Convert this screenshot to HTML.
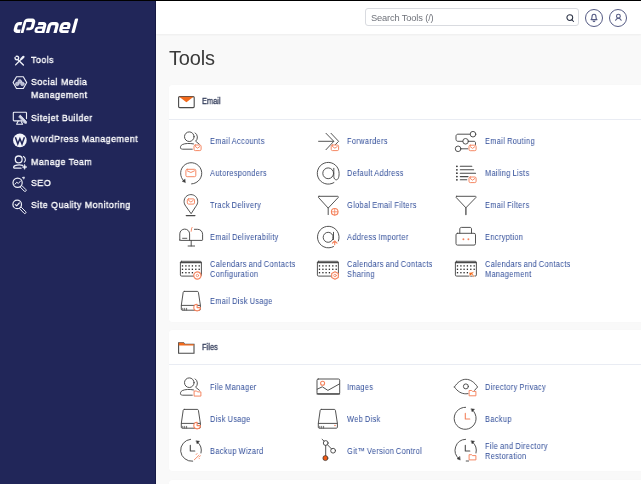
<!DOCTYPE html>
<html><head><meta charset="utf-8">
<style>
*{margin:0;padding:0;box-sizing:border-box}
html,body{width:641px;height:484px;overflow:hidden;background:#f9f9f9;font-family:"Liberation Sans",sans-serif}
#topline{position:absolute;left:0;top:0;width:641px;height:1px;background:#000}
#side{position:absolute;left:0;top:1px;width:156px;height:483px;background:#212659;border-right:1px solid #161a45}
.nav{position:absolute;left:30.5px;color:#fff;font-size:9.9px;line-height:13.4px;white-space:nowrap;letter-spacing:0.5px;transform:scaleX(0.9);transform-origin:0 0;will-change:transform;-webkit-text-stroke:0.35px #fff}
#header{position:absolute;left:156px;top:1px;width:485px;height:33px;background:#fff;box-shadow:0 1px 2px rgba(0,0,0,0.05)}
#search{position:absolute;left:365px;top:8px;width:214px;height:18.2px;border:1px solid #d9dbe0;border-radius:3px;background:#fff}
#search span{position:absolute;left:4.5px;top:3.5px;font-size:9.3px;color:#6f727a;letter-spacing:-0.15px;will-change:transform}
.circ{position:absolute;top:8.6px;width:18px;height:18px;border:1px solid #555b84;border-radius:50%}
h1{position:absolute;left:169px;top:47px;font-weight:normal;font-size:20px;color:#3a3a3a;letter-spacing:-0.2px;will-change:transform}
.panel{position:absolute;left:169px;width:480px;background:#fff;border-radius:3px;box-shadow:0 0 1px rgba(0,0,0,0.04)}
.ph{position:absolute;left:0;top:0;width:100%;border-bottom:1px solid #e9ecf3}
.ph span{position:absolute;left:32.8px;font-size:8.7px;color:#323c5a;transform:scaleX(0.86);transform-origin:0 0;will-change:transform;-webkit-text-stroke:0.3px #323c5a}
.it{position:absolute;font-size:8.7px;line-height:10px;color:#2e4b98;white-space:nowrap;letter-spacing:0.4px;word-spacing:-0.6px;transform:scaleX(0.85);transform-origin:0 0;will-change:transform}
.ic{position:absolute;overflow:visible}
</style></head><body>
<div id="topline"></div>
<div id="side">
<svg class="ic" style="left:0;top:0" width="90" height="40" viewBox="0 0 90 40" fill="#fff" fill-rule="evenodd" stroke="none">
<g transform="matrix(1,0,-0.27,1,8.64,0)">
<path d="M19.3 20.9 H16.6 A3.9 3.9 0 0 0 12.7 24.8 V28.1 A3.9 3.9 0 0 0 16.6 32 H19.8 V28.6 H16.8 A0.8 0.8 0 0 1 16 27.8 V25.1 A0.8 0.8 0 0 1 16.8 24.3 H19.3 Z"/>
<path d="M20.6 32 V21.4 A3.8 3.8 0 0 1 24.4 17.6 H28.5 A3.8 3.8 0 0 1 32.3 21.4 V25.4 A3.8 3.8 0 0 1 28.5 29.2 H25.3 V26.4 H28.3 A0.8 0.8 0 0 0 29.1 25.6 V21.8 A0.8 0.8 0 0 0 28.3 21 H23.4 V32 Z"/>
<path d="M35.6 20.9 H40.4 A3.9 3.9 0 0 1 44.3 24.8 V32 H37 A3.2 3.2 0 0 1 33.8 28.8 A3.2 3.2 0 0 1 37 25.6 H41.1 V23.9 H35.6 Z M37.6 27.7 H41.1 V29.9 H37.6 A1.1 1.1 0 0 1 37.6 27.7 Z"/>
<path d="M45.8 32 V24.8 A3.9 3.9 0 0 1 49.7 20.9 H52.8 A3.9 3.9 0 0 1 56.7 24.8 V32 H53.4 V25.2 A0.9 0.9 0 0 0 52.5 24.3 H50 A0.9 0.9 0 0 0 49.1 25.2 V32 Z"/>
<path d="M62.1 20.9 H64.6 A3.9 3.9 0 0 1 68.5 24.8 V28.1 H61.6 V28.6 A0.6 0.6 0 0 0 62.2 29.2 H68.2 V32 H62 A3.8 3.8 0 0 1 58.2 28.2 V24.8 A3.9 3.9 0 0 1 62.1 20.9 Z M62.3 24.1 H64.6 A0.8 0.8 0 0 1 65.4 24.9 V26 H61.6 V24.8 A0.7 0.7 0 0 1 62.3 24.1 Z"/>
<rect x="71.2" y="17.6" width="3.3" height="14.4" rx="1"/>
</g></svg>
</div>
<svg class="ic" style="left:8px;top:50px" width="24" height="24" viewBox="0 0 24 24" fill="none" stroke="#eef0f8" stroke-width="1.25" stroke-linecap="round" stroke-linejoin="round"><path d="M15.4 6.9 L13.3 9" stroke-width="2.3"/><path d="M12.6 9.7 L7.6 14.9" stroke-width="1.3"/><path d="M10.2 9.9 L15.4 15" stroke-width="1.4"/><path d="M8.2 6.3 A1.8 1.8 0 1 1 7.1 7.5" stroke-width="1.4"/></svg>
<svg class="ic" style="left:8px;top:72px" width="24" height="24" viewBox="0 0 24 24" fill="none" stroke="#eef0f8" stroke-width="1.25" stroke-linecap="round" stroke-linejoin="round"><path d="M8.5 4.8 H15.3 L18.7 10.6 L15.3 16.5 H8.5 L5.1 10.6 Z" stroke-width="1.1"/><g fill="#b4b7cf" stroke="#dfe1ee" stroke-width="0.6"><circle cx="11.8" cy="9.4" r="1.8"/><circle cx="9.2" cy="11.9" r="1.8"/><circle cx="14.4" cy="11.9" r="1.8"/></g></svg>
<svg class="ic" style="left:8px;top:106px" width="24" height="24" viewBox="0 0 24 24" fill="none" stroke="#eef0f8" stroke-width="1.25" stroke-linecap="round" stroke-linejoin="round"><path d="M14 14.9 H6.1 A0.8 0.8 0 0 1 5.3 14.1 V7.1 A0.8 0.8 0 0 1 6.1 6.3 H17.7 A0.8 0.8 0 0 1 18.5 7.1 V12.6" stroke-width="1.1"/><path d="M10.2 15.1 L8.6 18.3 H14.6 L13.4 15.8" stroke-width="1.1"/><path d="M10.9 10.5 L12.3 9.1 L18.6 15.7 L18.3 17.4 L16.6 17.1 Z" fill="#d5d8e8" stroke-width="0.7"/></svg>
<svg class="ic" style="left:8px;top:128px" width="24" height="24" viewBox="0 0 24 24" fill="none" stroke="#eef0f8" stroke-width="1.25" stroke-linecap="round" stroke-linejoin="round"><circle cx="11.9" cy="12.4" r="6.8" fill="#f4f5fb" stroke="none"/><path d="M7.4 9.2 L9.8 15.9 L11.9 10.8 L14 15.9 L16.4 9.2" stroke="#212659" stroke-width="1.5" stroke-linejoin="miter" stroke-linecap="butt"/></svg>
<svg class="ic" style="left:8px;top:150px" width="24" height="24" viewBox="0 0 24 24" fill="none" stroke="#eef0f8" stroke-width="1.25" stroke-linecap="round" stroke-linejoin="round"><circle cx="10.7" cy="9.4" r="3.4" stroke-width="1.3"/><path d="M15.4 6.4 A3.6 3.6 0 0 1 16.3 12.2" stroke-width="1.1"/><path d="M14.6 15.3 C12.5 14.7 9 14.8 7 15.7 C5.4 16.4 5.2 18.2 6.6 18.2 H13" stroke-width="1.3"/><path d="M16.6 14.6 Q16.9 16.7 19 17 Q16.9 17.3 16.6 19.4 Q16.3 17.3 14.2 17 Q16.3 16.7 16.6 14.6 Z" fill="#eef0f8" stroke-width="0.5"/></svg>
<svg class="ic" style="left:8px;top:172px" width="24" height="24" viewBox="0 0 24 24" fill="none" stroke="#eef0f8" stroke-width="1.25" stroke-linecap="round" stroke-linejoin="round"><circle cx="9.6" cy="10.7" r="4.6" stroke-width="1.2"/><path d="M12.9 14.1 L13.7 13.4 L17.9 17.6 A1 1 0 0 1 17.9 19 L17.7 19.2 A1 1 0 0 1 16.3 19.2 L12.2 15 Z" stroke-width="1"/><path d="M7 12.2 L8.8 10.2 L10.3 11.5 L12.5 9" stroke-width="1"/><path d="M14.6 5.4 L16.4 5 L16 6.8 Z" fill="#eef0f8" stroke-width="0.7"/></svg>
<svg class="ic" style="left:8px;top:194px" width="24" height="24" viewBox="0 0 24 24" fill="none" stroke="#eef0f8" stroke-width="1.25" stroke-linecap="round" stroke-linejoin="round"><circle cx="9.2" cy="10.4" r="4.3" stroke-width="1.2"/><path d="M12.3 13.8 L13.1 13.1 L17.7 17.7 A1 1 0 0 1 17.7 19.1 L17.5 19.3 A1 1 0 0 1 16.1 19.3 L11.6 14.7 Z" stroke-width="1"/><path d="M7.3 10.6 L8.7 11.8 L11.3 9" stroke-width="1.2"/></svg>
<div class="nav" style="top:52.67px">Tools</div>
<div class="nav" style="top:74.87px">Social Media<br>Management</div>
<div class="nav" style="top:110.67px">Sitejet Builder</div>
<div class="nav" style="top:132.27px">WordPress Management</div>
<div class="nav" style="top:154.57px">Manage Team</div>
<div class="nav" style="top:176.37px">SEO</div>
<div class="nav" style="top:198.37px">Site Quality Monitoring</div>
<div id="header"></div>
<div id="search"><span>Search Tools (/)</span>
<svg class="ic" style="left:200px;top:4.6px" width="9" height="9" viewBox="0 0 9 9" fill="none" stroke="#2b3245" stroke-width="1.05"><circle cx="3.8" cy="3.6" r="2.9"/><path d="M5.9 5.8 L7.6 7.5" stroke-linecap="round"/></svg>
</div>
<div class="circ" style="left:585px"></div>
<div class="circ" style="left:609.2px"></div>
<svg class="ic" style="left:584px;top:8px" width="20" height="20" viewBox="0 0 20 20" fill="none" stroke="#555b84" stroke-width="1.1" stroke-linejoin="round" stroke-linecap="round"><path d="M7 11.6 C7.8 11 8 10.2 8 8.9 C8 7.2 8.9 6.3 10 6.3 C11.1 6.3 12 7.2 12 8.9 C12 10.2 12.2 11 13 11.6 Z"/><path d="M9.1 12.8 A0.9 0.9 0 0 0 10.9 12.8"/></svg>
<svg class="ic" style="left:609px;top:8px" width="20" height="20" viewBox="0 0 20 20" fill="none" stroke="#555b84" stroke-width="1.1" stroke-linecap="round"><circle cx="9.4" cy="8.2" r="1.9"/><path d="M6.6 12.2 C7.3 11 8.2 10.3 9.4 10.3 C10.6 10.3 11.5 11 12.2 12.2"/></svg>
<h1>Tools</h1>
<div class="panel" style="top:85px;height:237px"><div class="ph" style="height:35px"><span style="top:10.8px">Email</span></div></div>
<svg class="ic" style="left:178px;top:96px" width="17" height="12" viewBox="0 0 17 12"><rect x="0.6" y="0.6" width="15.6" height="11" rx="1" fill="#fff" stroke="#4a4a4a" stroke-width="1.1"/><path d="M1.2 0.8 H15.6 L8.4 6.2 Z" fill="#f26a1c"/></svg>
<div class="panel" style="top:330px;height:141.4px"><div class="ph" style="height:35px"><span style="top:11.8px">Files</span></div></div>
<svg class="ic" style="left:178px;top:342px" width="17" height="12" viewBox="0 0 17 12"><path d="M0.6 11.3 V0.8 H5.6 L6.6 2.2 H16 V11.3 Z" fill="#fff" stroke="#4a4a4a" stroke-width="1.1"/><path d="M0.8 0.8 H5.6 L6.6 2.2 H15.8 V3.4 H0.8 Z" fill="#f26a1c"/></svg>
<div class="panel" style="top:480px;height:20px"></div>
<svg class="ic" style="left:176px;top:128px" width="30" height="30" viewBox="0 0 30 30" fill="none" stroke="#4a4a4a" stroke-width="0.95" stroke-linecap="round" stroke-linejoin="round"><circle cx="13.3" cy="8.7" r="4.8"/><path d="M19.2 4.9 A5.2 5.2 0 0 1 19.6 13.2 L23.4 16.3"/><path d="M17.5 15.9 C14 15.2 9 15.2 6.3 16.6 C4.6 17.5 4.2 19 4.6 20.2 C4.9 21 5.6 21.2 6.5 21.2 H16.3"/><rect x="18" y="17" width="7.1" height="5.6" rx="1.3" stroke="#f4825c" fill="#fff"/><path d="M19.3 18.5 L21.55 20.2 L23.8 18.5" stroke="#f4825c"/></svg>
<div class="it" style="left:209.5px;top:136.30px">Email Accounts</div>
<svg class="ic" style="left:313px;top:128px" width="30" height="30" viewBox="0 0 30 30" fill="none" stroke="#4a4a4a" stroke-width="0.95" stroke-linecap="round" stroke-linejoin="round"><path d="M5.6 13.3 H20.5"/><path d="M13 5.3 L20.8 13.3 L13 21.7"/><path d="M18 5.3 L25.6 13.3 L22 17"/><rect x="18.2" y="17" width="7.4" height="5.6" rx="1.3" stroke="#f4825c" fill="#fff"/><path d="M19.5 18.5 L21.9 20.2 L24.3 18.5" stroke="#f4825c"/></svg>
<div class="it" style="left:347.0px;top:136.30px">Forwarders</div>
<svg class="ic" style="left:451px;top:128px" width="30" height="30" viewBox="0 0 30 30" fill="none" stroke="#4a4a4a" stroke-width="0.95" stroke-linecap="round" stroke-linejoin="round"><circle cx="22" cy="6.2" r="2.8"/><path d="M19.2 6.2 H7 C5.8 6.2 5 7 5 8.2 V11.3 C5 12.5 5.8 13.3 7 13.3 H11.8"/><circle cx="14.6" cy="13.3" r="2.8"/><path d="M17.4 13.3 H23 C23.9 13.3 24.5 14 24.5 14.9 V16.5"/><circle cx="7.1" cy="20.8" r="2.8"/><path d="M9.9 20.8 H16.8"/><rect x="18" y="17.2" width="7.1" height="5.5" rx="1.3" stroke="#f4825c" fill="#fff"/><path d="M19.3 18.7 L21.55 20.4 L23.8 18.7" stroke="#f4825c"/></svg>
<div class="it" style="left:485.0px;top:136.30px">Email Routing</div>
<svg class="ic" style="left:176px;top:160px" width="30" height="30" viewBox="0 0 30 30" fill="none" stroke="#4a4a4a" stroke-width="0.95" stroke-linecap="round" stroke-linejoin="round"><path d="M15.6 23.9 A10.6 10.6 0 1 0 8.3 21.4"/><path d="M9.2 22.5 L6.2 21.3 L8.8 19.2 Z" fill="#333" stroke-width="0.5"/><rect x="9.9" y="9.3" width="9.9" height="7.4" rx="1.3" stroke="#f4825c" fill="#fff"/><path d="M11.200000000000001 10.8 L14.850000000000001 12.5 L18.5 10.8" stroke="#f4825c"/></svg>
<div class="it" style="left:209.5px;top:168.30px">Autoresponders</div>
<svg class="ic" style="left:313px;top:160px" width="30" height="30" viewBox="0 0 30 30" fill="none" stroke="#4a4a4a" stroke-width="0.95" stroke-linecap="round" stroke-linejoin="round"><circle cx="15.2" cy="13.3" r="5.4"/><path d="M20.8 8.3 V16.5 C20.8 18.6 22 19.8 23.3 19.8 C25 19.8 26.1 17.5 26.1 13.6 A10.9 10.9 0 1 0 20.9 22.6"/></svg>
<div class="it" style="left:347.0px;top:168.30px">Default Address</div>
<svg class="ic" style="left:451px;top:160px" width="30" height="30" viewBox="0 0 30 30" fill="none" stroke="#4a4a4a" stroke-width="0.95" stroke-linecap="round" stroke-linejoin="round"><circle cx="5.9" cy="6.3" r="0.9" fill="#333" stroke="none"/><circle cx="5.9" cy="9.8" r="0.9" fill="#333" stroke="none"/><circle cx="5.9" cy="13.2" r="0.9" fill="#333" stroke="none"/><circle cx="5.9" cy="16.6" r="0.9" fill="#333" stroke="none"/><circle cx="5.9" cy="19.8" r="0.9" fill="#333" stroke="none"/><path d="M9.3 6.3 H20.8" stroke-width="1.1"/><path d="M9.3 9.8 H22.6" stroke-width="1.1"/><path d="M9.3 13.2 H24.5" stroke-width="1.1"/><path d="M9.3 16.6 H17" stroke-width="1.1"/><path d="M9.3 19.8 H15.8" stroke-width="1.1"/><rect x="18" y="17" width="7.1" height="5.6" rx="1.3" stroke="#f4825c" fill="#fff"/><path d="M19.3 18.5 L21.55 20.2 L23.8 18.5" stroke="#f4825c"/></svg>
<div class="it" style="left:485.0px;top:168.30px">Mailing Lists</div>
<svg class="ic" style="left:176px;top:192px" width="30" height="30" viewBox="0 0 30 30" fill="none" stroke="#4a4a4a" stroke-width="0.95" stroke-linecap="round" stroke-linejoin="round"><path d="M14.9 21.4 L9.8 14.2 C8.6 12.6 8.1 11.2 8.1 9.5 C8.1 5.6 11.1 2.6 14.9 2.6 C18.7 2.6 21.7 5.6 21.7 9.5 C21.7 11.2 21.2 12.6 20 14.2 Z"/><path d="M10.3 23.6 H18.9" stroke-width="1.3"/><rect x="11.3" y="6.9" width="7.2" height="5.2" rx="1.3" stroke="#f4825c" fill="#fff"/><path d="M12.600000000000001 8.4 L14.9 10.100000000000001 L17.2 8.4" stroke="#f4825c"/></svg>
<div class="it" style="left:209.5px;top:200.30px">Track Delivery</div>
<svg class="ic" style="left:313px;top:192px" width="30" height="30" viewBox="0 0 30 30" fill="none" stroke="#4a4a4a" stroke-width="0.95" stroke-linecap="round" stroke-linejoin="round"><path d="M6 4.3 H24.7 C25.3 4.3 25.6 5 25.2 5.5 L15.2 16.1 L5.5 5.5 C5.1 5 5.4 4.3 6 4.3 Z"/><path d="M15.2 16.1 V22.6"/><circle cx="21.7" cy="19.8" r="3.3" stroke="#f4825c" fill="#fff" stroke-width="1.1"/><path d="M18.5 19.8 H24.9 M21.7 16.6 V23.0" stroke="#f4825c" stroke-width="0.8"/></svg>
<div class="it" style="left:347.0px;top:200.30px">Global Email Filters</div>
<svg class="ic" style="left:451px;top:192px" width="30" height="30" viewBox="0 0 30 30" fill="none" stroke="#4a4a4a" stroke-width="0.95" stroke-linecap="round" stroke-linejoin="round"><path d="M5.7 4.3 H24.4 C25 4.3 25.3 5 24.9 5.5 L14.9 15.8 L5.2 5.5 C4.8 5 5.1 4.3 5.7 4.3 Z"/><path d="M14.9 15.8 V22.6" stroke-width="1.3"/></svg>
<div class="it" style="left:485.0px;top:200.30px">Email Filters</div>
<svg class="ic" style="left:176px;top:224px" width="30" height="30" viewBox="0 0 30 30" fill="none" stroke="#4a4a4a" stroke-width="0.95" stroke-linecap="round" stroke-linejoin="round"><path d="M3.8 16.4 V9.9 C3.8 7.2 6 5.1 8.7 5.1 C11.4 5.1 13.6 7.2 13.6 9.9 V16.4"/><path d="M18.4 5.3 H21.6 C24.3 5.3 26.6 7.5 26.6 10.2 V15.8 C26.6 16.2 26.3 16.4 26 16.4 H4.4 C4 16.4 3.8 16.2 3.8 15.8"/><path d="M6.6 14.3 H10.8" stroke-width="0.9"/><path d="M15.2 16.4 V22 M12.1 22 H18.6"/><path d="M16.2 3.3 C15.2 4 15.6 5.3 15.2 7.3" stroke="#f4825c"/></svg>
<div class="it" style="left:209.5px;top:232.30px">Email Deliverability</div>
<svg class="ic" style="left:313px;top:224px" width="30" height="30" viewBox="0 0 30 30" fill="none" stroke="#4a4a4a" stroke-width="0.95" stroke-linecap="round" stroke-linejoin="round"><circle cx="15.2" cy="13.3" r="5"/><path d="M20.5 8.3 V15.5"/><path d="M25.4 17 A10.8 10.8 0 1 0 20.5 22.6"/><path d="M21.7 20.8 V17.3 M19.4 19.1 L21.7 17 L24 19.1" stroke="#f4825c" stroke-width="1.1"/></svg>
<div class="it" style="left:347.0px;top:232.30px">Address Importer</div>
<svg class="ic" style="left:451px;top:224px" width="30" height="30" viewBox="0 0 30 30" fill="none" stroke="#4a4a4a" stroke-width="0.95" stroke-linecap="round" stroke-linejoin="round"><path d="M8.8 9.3 V5 C8.8 4 9.5 3.4 10.4 3.4 H19 C19.9 3.4 20.5 4 20.5 5 V9.3"/><rect x="5" y="9.3" width="19.5" height="11.8" rx="1.5"/><circle cx="12.4" cy="15.2" r="0.95" fill="#f4825c" stroke="none"/><circle cx="17.4" cy="15.2" r="0.95" fill="#f4825c" stroke="none"/></svg>
<div class="it" style="left:485.0px;top:232.30px">Encryption</div>
<svg class="ic" style="left:176px;top:256px" width="30" height="30" viewBox="0 0 30 30" fill="none" stroke="#4a4a4a" stroke-width="0.95" stroke-linecap="round" stroke-linejoin="round"><rect x="4.4" y="5.3" width="21" height="14.8" rx="1.2"/><path d="M4.6 6.6 H25.2" stroke-width="1.4"/><rect x="5.85" y="9.25" width="1.3" height="1.3" fill="#222" stroke="none"/><rect x="9.25" y="9.25" width="1.3" height="1.3" fill="#222" stroke="none"/><rect x="12.45" y="9.25" width="1.3" height="1.3" fill="#222" stroke="none"/><rect x="15.749999999999998" y="9.25" width="1.3" height="1.3" fill="#222" stroke="none"/><rect x="19.150000000000002" y="9.25" width="1.3" height="1.3" fill="#222" stroke="none"/><rect x="22.55" y="9.25" width="1.3" height="1.3" fill="#222" stroke="none"/><rect x="5.85" y="12.65" width="1.3" height="1.3" fill="#222" stroke="none"/><rect x="9.25" y="12.65" width="1.3" height="1.3" fill="#222" stroke="none"/><rect x="12.45" y="12.65" width="1.3" height="1.3" fill="#222" stroke="none"/><rect x="15.749999999999998" y="12.65" width="1.3" height="1.3" fill="#222" stroke="none"/><rect x="19.150000000000002" y="12.65" width="1.3" height="1.3" fill="#222" stroke="none"/><rect x="22.55" y="12.65" width="1.3" height="1.3" fill="#222" stroke="none"/><rect x="5.85" y="16.05" width="1.3" height="1.3" fill="#222" stroke="none"/><rect x="9.25" y="16.05" width="1.3" height="1.3" fill="#222" stroke="none"/><rect x="12.45" y="16.05" width="1.3" height="1.3" fill="#222" stroke="none"/><rect x="15.749999999999998" y="16.05" width="1.3" height="1.3" fill="#222" stroke="none"/><circle cx="21.4" cy="19.5" r="3.6" stroke="#f4825c" fill="#fff" stroke-width="1.2" stroke-dasharray="1.6 0.7"/><circle cx="21.4" cy="19.5" r="1.2" stroke="#f4825c" stroke-width="0.8"/></svg>
<div class="it" style="left:209.5px;top:258.90px">Calendars and Contacts<br>Configuration</div>
<svg class="ic" style="left:313px;top:256px" width="30" height="30" viewBox="0 0 30 30" fill="none" stroke="#4a4a4a" stroke-width="0.95" stroke-linecap="round" stroke-linejoin="round"><rect x="4.4" y="5.3" width="21" height="14.8" rx="1.2"/><path d="M4.6 6.6 H25.2" stroke-width="1.4"/><rect x="5.85" y="9.25" width="1.3" height="1.3" fill="#222" stroke="none"/><rect x="9.25" y="9.25" width="1.3" height="1.3" fill="#222" stroke="none"/><rect x="12.45" y="9.25" width="1.3" height="1.3" fill="#222" stroke="none"/><rect x="15.749999999999998" y="9.25" width="1.3" height="1.3" fill="#222" stroke="none"/><rect x="19.150000000000002" y="9.25" width="1.3" height="1.3" fill="#222" stroke="none"/><rect x="22.55" y="9.25" width="1.3" height="1.3" fill="#222" stroke="none"/><rect x="5.85" y="12.65" width="1.3" height="1.3" fill="#222" stroke="none"/><rect x="9.25" y="12.65" width="1.3" height="1.3" fill="#222" stroke="none"/><rect x="12.45" y="12.65" width="1.3" height="1.3" fill="#222" stroke="none"/><rect x="15.749999999999998" y="12.65" width="1.3" height="1.3" fill="#222" stroke="none"/><rect x="19.150000000000002" y="12.65" width="1.3" height="1.3" fill="#222" stroke="none"/><rect x="22.55" y="12.65" width="1.3" height="1.3" fill="#222" stroke="none"/><rect x="5.85" y="16.05" width="1.3" height="1.3" fill="#222" stroke="none"/><rect x="9.25" y="16.05" width="1.3" height="1.3" fill="#222" stroke="none"/><rect x="12.45" y="16.05" width="1.3" height="1.3" fill="#222" stroke="none"/><rect x="15.749999999999998" y="16.05" width="1.3" height="1.3" fill="#222" stroke="none"/><path d="M22 15.7 L25.3 17.6 V21.4 L22 23.3 L18.7 21.4 V17.6 Z" stroke="#f4825c" fill="#fff" stroke-width="1.1"/><circle cx="22" cy="19.5" r="1.3" stroke="#f4825c" stroke-width="0.8"/></svg>
<div class="it" style="left:347.0px;top:258.90px">Calendars and Contacts<br>Sharing</div>
<svg class="ic" style="left:451px;top:256px" width="30" height="30" viewBox="0 0 30 30" fill="none" stroke="#4a4a4a" stroke-width="0.95" stroke-linecap="round" stroke-linejoin="round"><rect x="4.4" y="5.3" width="21" height="14.8" rx="1.2"/><path d="M4.6 6.6 H25.2" stroke-width="1.4"/><rect x="5.85" y="9.25" width="1.3" height="1.3" fill="#222" stroke="none"/><rect x="9.25" y="9.25" width="1.3" height="1.3" fill="#222" stroke="none"/><rect x="12.45" y="9.25" width="1.3" height="1.3" fill="#222" stroke="none"/><rect x="15.749999999999998" y="9.25" width="1.3" height="1.3" fill="#222" stroke="none"/><rect x="19.150000000000002" y="9.25" width="1.3" height="1.3" fill="#222" stroke="none"/><rect x="22.55" y="9.25" width="1.3" height="1.3" fill="#222" stroke="none"/><rect x="5.85" y="12.65" width="1.3" height="1.3" fill="#222" stroke="none"/><rect x="9.25" y="12.65" width="1.3" height="1.3" fill="#222" stroke="none"/><rect x="12.45" y="12.65" width="1.3" height="1.3" fill="#222" stroke="none"/><rect x="15.749999999999998" y="12.65" width="1.3" height="1.3" fill="#222" stroke="none"/><rect x="19.150000000000002" y="12.65" width="1.3" height="1.3" fill="#222" stroke="none"/><rect x="22.55" y="12.65" width="1.3" height="1.3" fill="#222" stroke="none"/><rect x="5.85" y="16.05" width="1.3" height="1.3" fill="#222" stroke="none"/><rect x="9.25" y="16.05" width="1.3" height="1.3" fill="#222" stroke="none"/><rect x="12.45" y="16.05" width="1.3" height="1.3" fill="#222" stroke="none"/><rect x="15.749999999999998" y="16.05" width="1.3" height="1.3" fill="#222" stroke="none"/><path d="M18 16.6 L23.4 15.8 L21.6 17.8 L23.6 20.6 L22.6 21.2 L20.6 18.6 L18.8 20.6 Z" fill="#f26a1c" stroke="#fff" stroke-width="0.6"/></svg>
<div class="it" style="left:485.0px;top:258.90px">Calendars and Contacts<br>Management</div>
<svg class="ic" style="left:176px;top:288px" width="30" height="30" viewBox="0 0 30 30" fill="none" stroke="#4a4a4a" stroke-width="0.95" stroke-linecap="round" stroke-linejoin="round"><path d="M8.3 3.4 H21.3 C21.9 3.4 22.3 3.8 22.4 4.3 L24.4 17.4 V21.2 C24.4 21.8 24 22.2 23.4 22.2 H6.3 C5.7 22.2 5.3 21.8 5.3 21.2 V17.4 L7.2 4.3 C7.3 3.8 7.7 3.4 8.3 3.4 Z" fill="#fff"/><path d="M5.4 17.4 H24.3"/><path d="M6.8 22 V20.3 M8.7 22 V20.3 M10.6 22 V20.3" stroke-width="0.8"/><path d="M21.1 16.3 A3.3 3.3 0 1 0 24.400000000000002 19.6 H21.1 Z" stroke="#f4825c" fill="#fff" stroke-width="1.1"/></svg>
<div class="it" style="left:209.5px;top:296.30px">Email Disk Usage</div>
<svg class="ic" style="left:176px;top:374px" width="30" height="30" viewBox="0 0 30 30" fill="none" stroke="#4a4a4a" stroke-width="0.95" stroke-linecap="round" stroke-linejoin="round"><circle cx="13.3" cy="8.7" r="4.8"/><path d="M19.2 4.9 A5.2 5.2 0 0 1 19.6 13.2 L23.4 16.3"/><path d="M17.5 15.9 C14 15.2 9 15.2 6.3 16.6 C4.6 17.5 4.2 19 4.6 20.2 C4.9 21 5.6 21.2 6.5 21.2 H16.3"/><path d="M18.1 21.7 V17 H20.700000000000003 L21.5 17.9 H24.900000000000002 V21.7 Z" stroke="#f4825c" fill="#fff"/></svg>
<div class="it" style="left:209.5px;top:382.30px">File Manager</div>
<svg class="ic" style="left:313px;top:374px" width="30" height="30" viewBox="0 0 30 30" fill="none" stroke="#4a4a4a" stroke-width="0.95" stroke-linecap="round" stroke-linejoin="round"><rect x="4" y="5" width="22.7" height="15.1" rx="1.2"/><path d="M4.2 19.9 H26.5" stroke-width="1.4"/><path d="M4.2 15.2 L9.3 12.8 L14.9 16.4 L26.5 9.9"/><circle cx="9.6" cy="9.3" r="2" stroke="#f4825c" stroke-width="1.1"/></svg>
<div class="it" style="left:347.0px;top:382.30px">Images</div>
<svg class="ic" style="left:451px;top:374px" width="30" height="30" viewBox="0 0 30 30" fill="none" stroke="#4a4a4a" stroke-width="0.95" stroke-linecap="round" stroke-linejoin="round"><path d="M3.4 13 C6.5 8.2 10.5 5.3 14.9 5.3 C19.3 5.3 23.4 8.2 26.6 13 C25.6 14.3 24.6 15.4 23.5 16.3 M17 19.6 C16.3 19.7 15.6 19.8 14.9 19.8 C10.5 19.8 6.5 17.6 3.4 13"/><circle cx="14.9" cy="12.4" r="2.5"/><path d="M18.1 21.4 V16.5 H20.700000000000003 L21.5 17.4 H24.900000000000002 V21.4 Z" stroke="#f4825c" fill="#fff"/></svg>
<div class="it" style="left:485.0px;top:382.30px">Directory Privacy</div>
<svg class="ic" style="left:176px;top:406px" width="30" height="30" viewBox="0 0 30 30" fill="none" stroke="#4a4a4a" stroke-width="0.95" stroke-linecap="round" stroke-linejoin="round"><path d="M8.3 3.4 H21.3 C21.9 3.4 22.3 3.8 22.4 4.3 L24.4 17.4 V21.2 C24.4 21.8 24 22.2 23.4 22.2 H6.3 C5.7 22.2 5.3 21.8 5.3 21.2 V17.4 L7.2 4.3 C7.3 3.8 7.7 3.4 8.3 3.4 Z" fill="#fff"/><path d="M5.4 17.4 H24.3"/><path d="M6.8 22 V20.3 M8.7 22 V20.3 M10.6 22 V20.3" stroke-width="0.8"/><path d="M21.1 16.3 A3.3 3.3 0 1 0 24.400000000000002 19.6 H21.1 Z" stroke="#f4825c" fill="#fff" stroke-width="1.1"/></svg>
<div class="it" style="left:209.5px;top:414.30px">Disk Usage</div>
<svg class="ic" style="left:313px;top:406px" width="30" height="30" viewBox="0 0 30 30" fill="none" stroke="#4a4a4a" stroke-width="0.95" stroke-linecap="round" stroke-linejoin="round"><path d="M8.3 3.4 H21.3 C21.9 3.4 22.3 3.8 22.4 4.3 L24.4 17.4 V21.2 C24.4 21.8 24 22.2 23.4 22.2 H6.3 C5.7 22.2 5.3 21.8 5.3 21.2 V17.4 L7.2 4.3 C7.3 3.8 7.7 3.4 8.3 3.4 Z" fill="#fff"/><path d="M5.4 17.4 H24.3"/><path d="M6.8 22 V20.3 M8.7 22 V20.3 M10.6 22 V20.3" stroke-width="0.8"/><circle cx="22" cy="19.5" r="0.8" fill="#f4825c" stroke="none"/></svg>
<div class="it" style="left:347.0px;top:414.30px">Web Disk</div>
<svg class="ic" style="left:451px;top:406px" width="30" height="30" viewBox="0 0 30 30" fill="none" stroke="#4a4a4a" stroke-width="0.95" stroke-linecap="round" stroke-linejoin="round"><path d="M14.6 1.3 A11 11 0 1 0 21.4 4"/><path d="M20.3 2.8 L23.5 3.2 L21.3 5.7 Z" fill="#333" stroke-width="0.5"/><path d="M14.3 7.4 V13 H18.8" stroke="#f4825c" stroke-width="1.1"/></svg>
<div class="it" style="left:485.0px;top:414.30px">Backup</div>
<svg class="ic" style="left:176px;top:438px" width="30" height="30" viewBox="0 0 30 30" fill="none" stroke="#4a4a4a" stroke-width="0.95" stroke-linecap="round" stroke-linejoin="round"><path d="M14.6 1.3 A11 11 0 0 0 16.7 23.2"/><path d="M25 15 A11 11 0 0 0 21.4 4"/><path d="M20.3 2.8 L23.5 3.2 L21.3 5.7 Z" fill="#333" stroke-width="0.5"/><path d="M14.3 7.4 V13 H18.8" stroke-width="1.1"/><path d="M18.3 21.8 L23 17.2 M20.2 16.5 L21 15.6 M23.5 18.5 L24.4 17.8 M22.8 20 L23.3 20.5" stroke="#f4825c" stroke-width="0.9"/></svg>
<div class="it" style="left:209.5px;top:446.30px">Backup Wizard</div>
<svg class="ic" style="left:313px;top:438px" width="30" height="30" viewBox="0 0 30 30" fill="none" stroke="#4a4a4a" stroke-width="0.95" stroke-linecap="round" stroke-linejoin="round"><circle cx="12.7" cy="5" r="2.4"/><path d="M9.1 1.3 L11 3.1"/><path d="M12.7 7.4 V17.6"/><path d="M14.4 6.7 L18.5 10.9"/><circle cx="20.1" cy="12.7" r="2.4"/><circle cx="12.4" cy="20.1" r="2.5" fill="#f05a14" stroke="#333" stroke-width="0.7"/></svg>
<div class="it" style="left:347.0px;top:446.30px">Git™ Version Control</div>
<svg class="ic" style="left:451px;top:438px" width="30" height="30" viewBox="0 0 30 30" fill="none" stroke="#4a4a4a" stroke-width="0.95" stroke-linecap="round" stroke-linejoin="round"><path d="M14.6 1.3 A11 11 0 0 0 8.1 20.8"/><path d="M9 21.9 L6 20.7 L8.6 18.6 Z" fill="#333" stroke-width="0.5"/><path d="M25 15 A11 11 0 0 0 21.4 4"/><path d="M20.3 2.8 L23.5 3.2 L21.3 5.7 Z" fill="#333" stroke-width="0.5"/><path d="M15.2 23 H17.6"/><path d="M14.3 7.4 V13 H18.8" stroke-width="1.1"/><path d="M18.1 21.5 V16.7 H20.700000000000003 L21.5 17.599999999999998 H24.900000000000002 V21.5 Z" stroke="#f4825c" fill="#fff"/></svg>
<div class="it" style="left:485.0px;top:440.90px">File and Directory<br>Restoration</div>
</body></html>
